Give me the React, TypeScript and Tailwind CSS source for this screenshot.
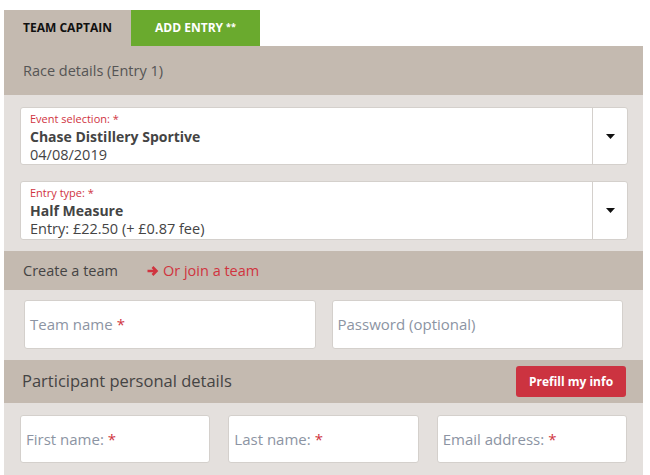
import React from "react";

const Caret = () => (
  <svg width="9" height="5" viewBox="0 0 9 5"><path d="M0 0h9L4.5 5z" fill="#111" /></svg>
);

function SelectBox({ label, title, sub, h }: { label: string; title: string; sub: string; h: string }) {
  return (
    <div className={`flex ${h} bg-white border border-[#d4d0cc] rounded-[3px]`}>
      <div className="flex-1 pl-[9px] pt-[4px] leading-none">
        <div className="text-[11px] text-[#d0343f] leading-[14px]">{label}</div>
        <div className="text-[14px] font-bold text-[#444] leading-[19px] mt-[1px]">{title}</div>
        <div className="text-[14.5px] text-[#444] leading-[17px]">{sub}</div>
      </div>
      <div className="w-[35px] border-l border-[#d4d0cc] flex items-center justify-center">
        <Caret />
      </div>
    </div>
  );
}

function Input({ text, req }: { text: string; req?: boolean }) {
  return (
    <div className="bg-white border border-[#d4d0cc] rounded-[3px] flex items-center pl-[5px] text-[15px] text-[#8c94a3]">
      {text}
      {req && <span className="text-[#d0343f] ml-[4px]">*</span>}
    </div>
  );
}

export default function App() {
  return (
    <div className="w-[650px] h-[475px] bg-white overflow-hidden pl-[4px] pr-[7px] pt-[10px]" style={{ fontFamily: '"Open Sans", sans-serif' }}>
      <div className="flex h-[36px]">
        <div className="w-[127px] bg-[#c4bab0] flex items-center justify-center text-[12px] font-bold text-[#111]">TEAM CAPTAIN</div>
        <div className="w-[129px] bg-[#6aaa2e] flex items-center justify-center text-[12px] font-bold text-white">
          ADD ENTRY<sup className="text-[9px] ml-[3px] relative -top-[1px]">**</sup>
        </div>
      </div>
      <div className="h-[49px] bg-[#c4bab0] flex items-center pl-[19px] text-[14.5px] text-[#555]">Race details (Entry 1)</div>
      <div className="bg-[#e4e0dd] pt-[12px] pb-[11px] pr-[15px] pl-[16px] flex flex-col gap-[16px]">
        <SelectBox label="Event selection: *" title="Chase Distillery Sportive" sub="04/08/2019" h="h-[58px]" />
        <SelectBox label="Entry type: *" title="Half Measure" sub="Entry: £22.50 (+ £0.87 fee)" h="h-[59px]" />
      </div>
      <div className="h-[39px] bg-[#c4bab0] flex items-center pl-[19px] text-[14.5px]">
        <span className="text-[#444]">Create a team</span>
        <span className="ml-[29px] text-[#d0343f] flex items-center">
          <svg width="12" height="12" viewBox="0 0 12 12" className="mr-[4px]"><path d="M0.5 6h8.5M5.5 2l4 4-4 4" stroke="#d0343f" strokeWidth="2.6" fill="none" /></svg>
          Or join a team
        </span>
      </div>
      <div className="bg-[#e4e0dd] pt-[10px] pb-[11px] px-[20px] grid grid-cols-2 gap-[16px]">
        <div className="h-[49px] grid"><Input text="Team name" req /></div>
        <div className="h-[49px] grid"><Input text="Password (optional)" /></div>
      </div>
      <div className="h-[43px] bg-[#c4bab0] flex items-center justify-between pl-[18px] pr-[17px]">
        <span className="text-[16.5px] text-[#444]">Participant personal details</span>
        <div className="w-[110px] h-[31px] bg-[#cc3340] rounded-[3px] flex items-center justify-center text-white font-bold text-[12px]">Prefill my info</div>
      </div>
      <div className="bg-[#e4e0dd] pt-[12px] pb-[20px] pl-[16px] pr-[16px] grid grid-cols-3 gap-[18px]">
        <div className="h-[48px] grid"><Input text="First name:" req /></div>
        <div className="h-[48px] grid"><Input text="Last name:" req /></div>
        <div className="h-[48px] grid"><Input text="Email address:" req /></div>
      </div>
    </div>
  );
}
